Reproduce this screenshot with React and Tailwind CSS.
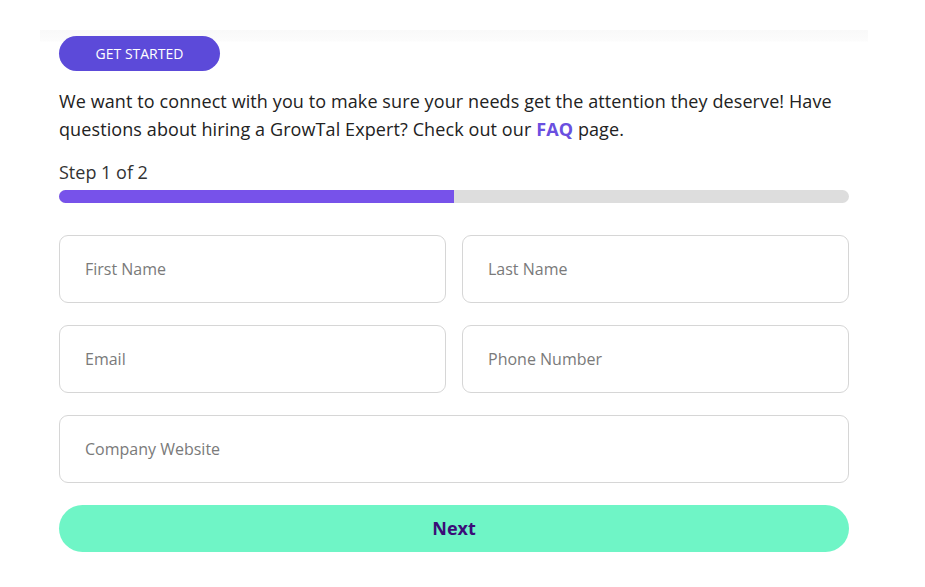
const fields = [
  ['First Name', 'Last Name'],
  ['Email', 'Phone Number'],
];

const Field = ({ placeholder, className = '' }) => (
  <input
    type="text"
    placeholder={placeholder}
    className={`h-[68px] rounded-[9px] border border-[#d6d6d6] bg-white px-[25px] text-[16px] text-[#333] placeholder:text-[#7a7a7a] outline-none ${className}`}
  />
);

export default function App() {
  return (
    <div className="min-h-[587px] bg-white pt-[30px] font-['Open_Sans',sans-serif]">
      <div className="ml-[40px] w-[828px] bg-[linear-gradient(to_bottom,#f9f9f9_0px,#fcfcfc_11px,#ffffff_12px)] px-[19px] pt-[6px]">
        {/* Header pill */}
        <button className="flex h-[35px] w-[161px] items-center justify-center rounded-full bg-[#5c4ad9] text-[14px] uppercase text-white">
          Get Started
        </button>

        <p className="mt-[16px] w-[790px] text-[18px] leading-[28px] tracking-[0.1px] text-[#222]">
          We want to connect with you to make sure your needs get the attention they deserve! Have questions about hiring a GrowTal Expert? Check out our{' '}
          <a href="#" className="font-bold text-[#6a4fe0]">FAQ</a> page.
        </p>

        {/* Progress */}
        <div className="mt-[17px] text-[18px] leading-[24px] text-[#333]">Step 1 of 2</div>
        <div className="mt-[6px] flex h-[13px] w-[790px] overflow-hidden rounded-full bg-[#dddddd]">
          <div className="h-full w-1/2 bg-[#7752ea]" />
        </div>

        {/* Form */}
        <form className="mt-[32px] flex w-[790px] flex-col gap-[22px]" onSubmit={e => e.preventDefault()}>
          {fields.map(row => (
            <div key={row[0]} className="grid grid-cols-2 gap-[16px]">
              {row.map(p => <Field key={p} placeholder={p} />)}
            </div>
          ))}
          <Field placeholder="Company Website" className="w-full" />
          <button
            type="submit"
            className="h-[47px] w-full rounded-full bg-[#6ff5c6] text-[18px] font-bold text-[#3b0d78]"
          >
            Next
          </button>
        </form>
      </div>
    </div>
  );
}
